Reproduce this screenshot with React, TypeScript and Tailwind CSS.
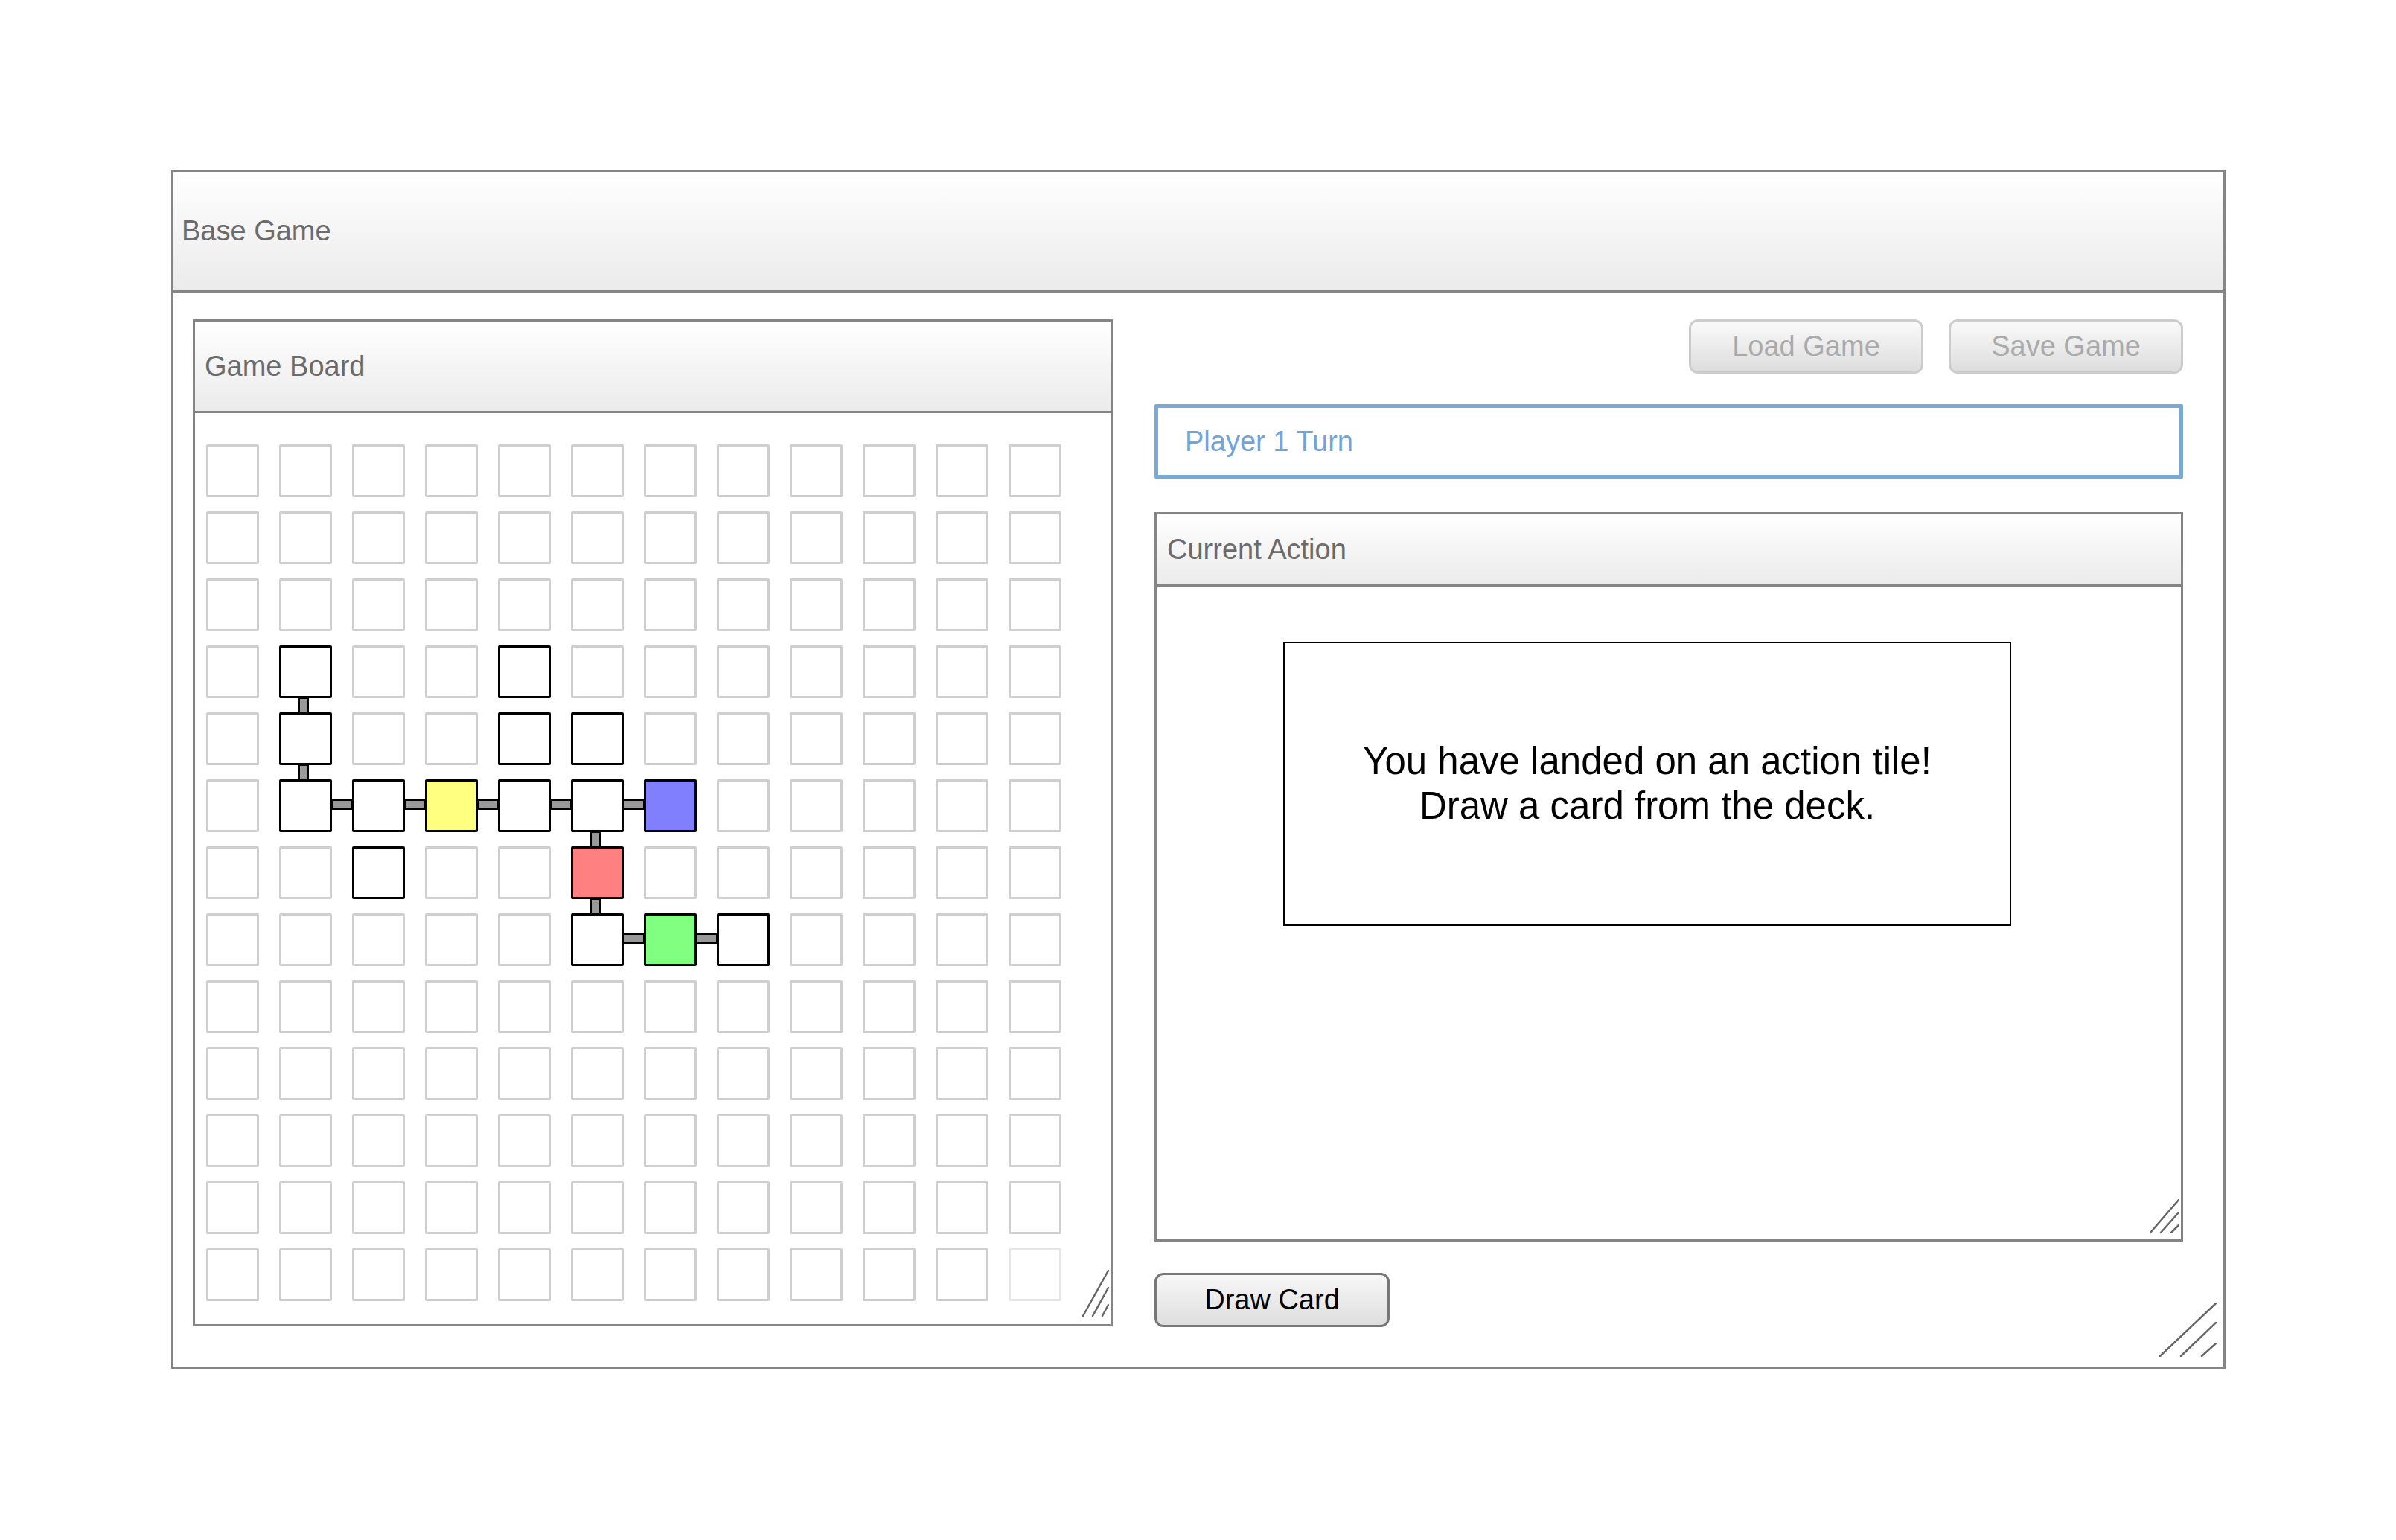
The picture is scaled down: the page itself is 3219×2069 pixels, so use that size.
import React from "react";

type Cell = { fill?: string; right?: boolean; down?: boolean; faint?: boolean };

const ROWS = 13;
const COLS = 12;

// tiles that are part of the path, keyed "row-col"
const path: Record<string, Cell> = {
  "3-1": { down: true },
  "3-4": {},
  "4-1": { down: true },
  "4-4": {},
  "4-5": {},
  "5-1": { right: true },
  "5-2": { right: true },
  "5-3": { fill: "bg-[#ffff80]", right: true },
  "5-4": { right: true },
  "5-5": { right: true, down: true },
  "5-6": { fill: "bg-[#8080ff]" },
  "6-2": {},
  "6-5": { fill: "bg-[#ff8080]", down: true },
  "7-5": { right: true },
  "7-6": { fill: "bg-[#80ff80]", right: true },
  "7-7": {},
};

function ResizeGrip({ w, h, lines }: { w: number; h: number; lines: number[][] }) {
  return (
    <svg width={w} height={h} viewBox={`0 0 ${w} ${h}`}>
      {lines.map((l, i) => (
        <line key={i} x1={l[0]} y1={l[1]} x2={l[2]} y2={l[3]} stroke="#666" strokeWidth={2.5} strokeLinecap="round" />
      ))}
    </svg>
  );
}

function Tile({ r, c }: { r: number; c: number }) {
  const cell = path[`${r}-${c}`];
  if (!cell) {
    const last = r === ROWS - 1 && c === COLS - 1;
    return (
      <div
        className={`w-[71px] h-[71px] rounded-[2px] border-[3px] bg-white ${
          last ? "border-[#e6e6e6]" : "border-[#cfcfcf]"
        }`}
      />
    );
  }
  return (
    <div className={`relative w-[71px] h-[71px] rounded-[2px] border-[3px] border-black ${cell.fill ?? "bg-white"}`}>
      {cell.right && (
        <div className="absolute left-[67px] top-[24px] w-[29px] h-[14px] border-2 border-black bg-[#999]" />
      )}
      {cell.down && (
        <div className="absolute top-[67px] left-[23px] w-[14px] h-[21px] border-2 border-black bg-[#999]" />
      )}
    </div>
  );
}

function GameBoard() {
  const cells = [];
  for (let r = 0; r < ROWS; r++) {
    for (let c = 0; c < COLS; c++) {
      cells.push(<Tile key={`${r}-${c}`} r={r} c={c} />);
    }
  }
  return (
    <div className="relative w-[1236px] h-[1353px] border-[3px] border-[#858585] flex flex-col">
      <div className="h-[123px] border-b-[3px] border-[#858585] bg-linear-to-b from-white to-[#ebebeb] flex items-center pl-[13px] text-[38px] text-[#6b6b6b]">
        Game Board
      </div>
      <div className="pt-[42px] pl-[15px]">
        <div className="grid grid-cols-[repeat(12,71px)] gap-x-[27px] gap-y-[19px]">{cells}</div>
      </div>
      <div className="absolute right-[2px] bottom-[10px] flex">
        <ResizeGrip w={36} h={63} lines={[[1, 62, 35, 1], [14, 62, 35, 24], [27, 62, 35, 47]]} />
      </div>
    </div>
  );
}

export default function App() {
  return (
    <div className="w-[3219px] h-[2069px] bg-white overflow-hidden pt-[228px] pl-[230px] font-['Liberation_Sans',Arial,sans-serif]">
      <div className="relative w-[2760px] h-[1611px] border-[3px] border-[#858585] flex flex-col">
        <div className="h-[162px] border-b-[3px] border-[#858585] bg-linear-to-b from-white to-[#ebebeb] flex items-center pl-[11px] text-[38px] text-[#6b6b6b]">
          Base Game
        </div>

        <div className="flex pt-[36px] pl-[26px]">
          <GameBoard />

          <div className="ml-[56px] w-[1382px] flex flex-col">
            <div className="flex justify-end gap-[34px]">
              <button className="w-[315px] h-[73px] rounded-[12px] border-[3px] border-[#cccccc] bg-linear-to-b from-[#fafafa] to-[#dddddd] text-[38px] text-[#aaaaaa]">
                Load Game
              </button>
              <button className="w-[315px] h-[73px] rounded-[12px] border-[3px] border-[#cccccc] bg-linear-to-b from-[#fafafa] to-[#dddddd] text-[38px] text-[#aaaaaa]">
                Save Game
              </button>
            </div>

            <div className="mt-[41px] h-[100px] rounded-[2px] border-[5px] border-[#79aad6] flex items-center pl-[36px] text-[38px] text-[#6fa5d9]">
              Player 1 Turn
            </div>

            <div className="relative mt-[45px] h-[980px] border-[3px] border-[#858585] flex flex-col">
              <div className="h-[97px] border-b-[3px] border-[#858585] bg-linear-to-b from-white to-[#ebebeb] flex items-center pl-[14px] text-[38px] text-[#6b6b6b]">
                Current Action
              </div>
              <div className="ml-[170px] mt-[74px] w-[978px] h-[382px] border-2 border-black flex items-center justify-center text-center text-[51px] leading-[60px] text-black">
                <p>
                  You have landed on an action tile!
                  <br />
                  Draw a card from the deck.
                </p>
              </div>
              <div className="absolute right-[2px] bottom-[8px] flex">
                <ResizeGrip w={40} h={46} lines={[[1, 45, 39, 1], [15, 45, 39, 18], [29, 45, 39, 35]]} />
              </div>
            </div>

            <button className="mt-[42px] w-[316px] h-[73px] rounded-[12px] border-[3px] border-[#777777] bg-linear-to-b from-[#f7f7f7] to-[#dedede] text-[38px] text-black">
              Draw Card
            </button>
          </div>
        </div>

        <div className="absolute right-[9px] bottom-[13px] flex">
          <ResizeGrip w={77} h={73} lines={[[1, 72, 76, 1], [29, 72, 76, 27], [57, 72, 76, 55]]} />
        </div>
      </div>
    </div>
  );
}
